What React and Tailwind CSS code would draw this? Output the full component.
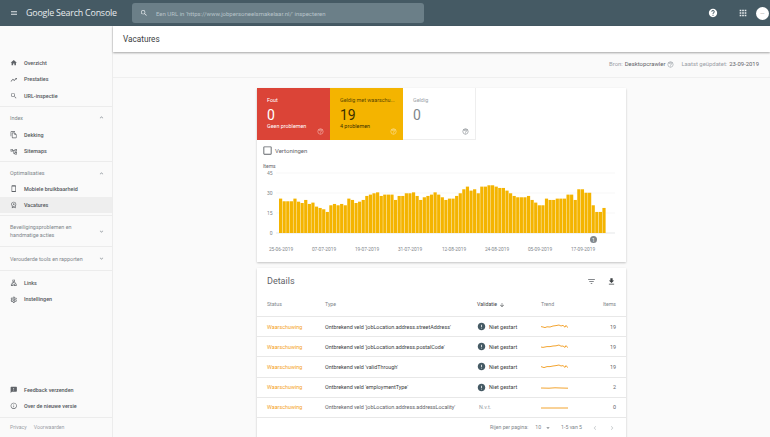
import {
  MdApps,
  MdArrowDownward,
  MdArrowDropDown,
  MdCheckBoxOutlineBlank,
  MdChevronLeft,
  MdChevronRight,
  MdError,
  MdExpandLess,
  MdExpandMore,
  MdFeedback,
  MdFileDownload,
  MdFilterList,
  MdHelp,
  MdHelpOutline,
  MdHome,
  MdInfoOutline,
  MdMenu,
  MdOutlineAccountTree,
  MdOutlineFileCopy,
  MdOutlineSettings,
  MdOutlineSmartphone,
  MdOutlineWorkspacePremium,
  MdOutlineLan,
  MdSearch,
  MdTrendingUp,
} from "react-icons/md";

const bars = [
  25.8, 23.8, 23.8, 23.8, 25.8, 23.5, 22.5, 24.8, 21.8, 22.8, 19.8, 18.8, 17.8, 15.8, 20.8, 21.8,
  20.8, 21.8, 20.8, 25.8, 24.8, 22.5, 23.5, 24.8, 27.8, 28.8, 29.8, 30.5, 27.8, 28.8, 28.8, 28.8,
  24.8, 27.8, 27.8, 29.8, 29.8, 30.5, 27.8, 24.8, 26.8, 27.8, 28.8, 30.5, 28.8, 26.8, 24.8, 25.8,
  25.8, 27.8, 29.8, 32.8, 34.8, 31.8, 32.8, 29.8, 34.8, 34.8, 35.8, 35.8, 34.8, 33.8, 33.8, 31.8,
  29.8, 27.8, 26.8, 26.8, 26.8, 27.8, 24.8, 22.8, 20.8, 20.8, 25.8, 24.8, 24.8, 25.8, 25.8, 25.8,
  28.8, 28.8, 24.8, 32.8, 32.8, 30.2, 30.2, 20.8, 15.8, 15.8, 18.8,
];

const dates = [
  ["25-06-2019", 24],
  ["07-07-2019", 67],
  ["19-07-2019", 110],
  ["31-07-2019", 153],
  ["12-08-2019", 197],
  ["24-08-2019", 240],
  ["05-09-2019", 283],
  ["17-09-2019", 326],
];

const rows = [
  ["Ontbrekend veld 'jobLocation.address.streetAddress'", true, "0,2.6 2,3 4,3.6 6,2.8 9,3 12,2 15,1.6 18,1 20,2 22,1.4 24,3.2 25,1.4 27,3.8", "19"],
  ["Ontbrekend veld 'jobLocation.address.postalCode'", true, "0,3 2,3.4 4,3 6,2.6 9,2.6 12,2 15,1.8 18,1 20,2.2 22,2 24,3.4 25,1.6 27,3.8", "19"],
  ["Ontbrekend veld 'validThrough'", true, "0,2.6 3,3.6 6,2.6 9,2.6 12,2 15,1.6 18,1 20,2 22,1.6 24,3.4 25,1.6 27,3.8", "19"],
  ["Ontbrekend veld 'employmentType'", true, "0,3 8,3.2 14,2.8 20,3 27,3.2", "2"],
  ["Ontbrekend veld 'jobLocation.address.addressLocality'", false, "0,3 27,3", "0"],
];

function NavItem({ icon: Icon, label, active }) {
  return (
    <div className={`flex h-[16.3px] items-center pl-[10px] ${active ? "bg-[#eeeeee]" : ""}`}>
      <Icon className="h-[7.5px] w-[7.5px] text-[#5f6368]" />
      <span className="ml-[6.5px] text-[5.4px] font-medium text-[#53575b]">{label}</span>
    </div>
  );
}

function NavHeading({ children, open }) {
  const Icon = open ? MdExpandLess : MdExpandMore;
  return (
    <div className="flex items-center justify-between pl-[10px] pr-[7px] text-[5.4px] leading-[8px] text-[#80868b]">
      <span>{children}</span>
      <Icon className="h-[7px] w-[7px] shrink-0 text-[#9aa0a6]" />
    </div>
  );
}

function Tile({ label, value, note, className, labelClass, helpClass }) {
  return (
    <div className={`flex w-[73px] flex-col px-[10px] pt-[8px] ${className}`}>
      <div className={`whitespace-nowrap text-[5.4px] leading-[8px] ${labelClass}`}>{label}</div>
      <div className="mt-[2.5px] text-[14px] leading-[16px]">{value}</div>
      <div className="h-[7px] text-[5.4px] leading-[7px]">{note}</div>
      <div className="-mr-[4px] flex justify-end">
        <MdHelpOutline className={`-mt-[2px] h-[7px] w-[7px] ${helpClass}`} />
      </div>
    </div>
  );
}

function Chart() {
  const step = 327 / bars.length;
  return (
    <svg width="369" height="101" className="block" fontFamily="Roboto, sans-serif">
      <text x="6" y="6.5" fontSize="5" fill="#5f6368">Items</text>
      {[["45", 12], ["30", 32], ["15", 52], ["0", 72]].map(([label, y]) => (
        <g key={label}>
          <text x="15.5" y={y + 1.8} fontSize="5" textAnchor="end" fill="#80868b">{label}</text>
          <line x1="19" x2="358" y1={y} y2={y} stroke={label === "0" ? "#d5d7d9" : "#f1f1f1"} strokeWidth="0.6" />
        </g>
      ))}
      {bars.map((value, i) => (
        <rect
          key={i}
          x={22 + i * step}
          y={72 - value * 1.333}
          width={step - 0.4}
          height={value * 1.333}
          fill="#f4b400"
        />
      ))}
      {dates.map(([label, x]) => (
        <text key={label} x={x} y="90" fontSize="4.8" textAnchor="middle" fill="#80868b">{label}</text>
      ))}
      <circle cx="336.5" cy="78.5" r="3.5" fill="#80868b" />
      <text x="336.5" y="80.5" fontSize="5" textAnchor="middle" fill="#fff">1</text>
    </svg>
  );
}

export default function App() {
  return (
    <div className="flex h-[437px] w-[770px] flex-col overflow-hidden bg-[#fafafa] font-['Roboto',sans-serif] text-[#3c4043]">
      <header className="flex h-[26px] shrink-0 items-center bg-[#455a64] text-white">
        <MdMenu className="ml-[10px] h-[8px] w-[8px] text-[#dfe4e6]" />
        <div className="ml-[8px] w-[106px] whitespace-nowrap font-['Open_Sans',sans-serif] text-[8.9px] tracking-[-0.2px] text-[#e8ecee]">
          <span className="font-medium">Google</span> Search Console
        </div>
        <div className="flex h-[20px] w-[292px] items-center rounded-[3px] bg-[#6b7f88]">
          <MdSearch className="ml-[8px] h-[8px] w-[8px] text-[#e8ecee]" />
          <span className="ml-[8px] text-[6px] text-[#b7c3c8]">Een URL in 'https://www.jobpersoneelsmakelaar.nl/' inspecteren</span>
        </div>
        <MdHelp className="ml-auto h-[10px] w-[10px] text-white" />
        <MdApps className="ml-[20px] h-[10px] w-[10px] text-[#e8ecee]" />
        <div className="ml-[8px] mr-[1px] flex h-[13px] w-[13px] items-center justify-center rounded-full bg-white text-[2px] text-[#999]">
          jobs
        </div>
      </header>

      <div className="flex min-h-0 flex-1">
        <aside className="flex w-[113px] shrink-0 flex-col border-r border-[#ececec] bg-[#fafafa]">
          <nav className="pt-[29px]">
            <NavItem icon={MdHome} label="Overzicht" />
            <NavItem icon={MdTrendingUp} label="Prestaties" />
            <NavItem icon={MdSearch} label="URL-inspectie" />
            <div className="mt-[2px] border-b border-[#ececec]" />
            <div className="pt-[7px]">
              <NavHeading open>Index</NavHeading>
            </div>
            <div className="pt-[5px]">
              <NavItem icon={MdOutlineFileCopy} label="Dekking" />
              <NavItem icon={MdOutlineAccountTree} label="Sitemaps" />
            </div>
            <div className="mt-[2px] border-b border-[#ececec]" />
            <div className="pt-[7px]">
              <NavHeading open>Optimalisaties</NavHeading>
            </div>
            <div className="pt-[3px]">
              <NavItem icon={MdOutlineSmartphone} label="Mobiele bruikbaarheid" />
              <NavItem icon={MdOutlineWorkspacePremium} label="Vacatures" active />
            </div>
            <div className="mt-[2px] border-b border-[#ececec]" />
            <div className="py-[7px]">
              <NavHeading>
                Beveiligingsproblemen en
                <br />
                handmatige acties
              </NavHeading>
            </div>
            <div className="border-b border-[#ececec]" />
            <div className="py-[7.5px]">
              <NavHeading>Verouderde tools en rapporten</NavHeading>
            </div>
            <div className="border-b border-[#ececec]" />
            <div className="pt-[4px]">
              <NavItem icon={MdOutlineLan} label="Links" />
              <NavItem icon={MdOutlineSettings} label="Instellingen" />
            </div>
          </nav>
          <div className="mt-auto">
            <NavItem icon={MdFeedback} label="Feedback verzenden" />
            <NavItem icon={MdInfoOutline} label="Over de nieuwe versie" />
            <div className="mt-[3px] flex h-[20px] items-center gap-[7px] border-t border-[#ececec] pl-[10px] text-[5.2px] text-[#9aa0a6]">
              <span>Privacy</span>
              <span>Voorwaarden</span>
            </div>
          </div>
        </aside>

        <main className="min-w-0 flex-1">
          <div className="relative flex h-[26px] items-center bg-white pl-[10px] text-[8.2px] text-[#3c4043] shadow-[0_1px_2px_rgba(0,0,0,0.35)]">
            Vacatures
          </div>
          <div className="flex h-[26px] items-center justify-end border-b border-[#efefef] pr-[11px] text-[5.9px] text-[#9aa0a6]">
            <span>Bron:</span>
            <span className="ml-[2px] text-[#5f6368]">Desktopcrawler</span>
            <MdHelpOutline className="ml-[2px] h-[7px] w-[7px]" />
            <span className="ml-[7px]">Laatst geüpdatet:</span>
            <span className="ml-[2px] text-[#5f6368]">23-09-2019</span>
          </div>

          <div className="ml-[144px] w-[369px] pt-[10px]">
            <section className="bg-white shadow-[0_1px_2px_rgba(0,0,0,0.22)]">
              <div className="flex h-[52px]">
                <Tile label="Fout" value="0" note="Geen problemen" className="bg-[#db4437] text-white" labelClass="text-white" helpClass="text-[#f3b5af]" />
                <Tile label="Geldig met waarschu..." value="19" note="4 problemen" className="bg-[#f4b400] text-[#3c3000]" labelClass="text-[#5a4500]" helpClass="text-[#fbe19a]" />
                <Tile label="Geldig" value="0" note="" className="border-r border-b border-[#eeeeee] bg-white text-[#80868b]" labelClass="text-[#9aa0a6]" helpClass="text-[#80868b]" />
              </div>
              <div className="flex h-[21px] items-center pl-[5px]">
                <MdCheckBoxOutlineBlank className="h-[11px] w-[11px] text-[#5f6368]" />
                <span className="ml-[2px] text-[6px] text-[#5f6368]">Vertoningen</span>
              </div>
              <Chart />
            </section>

            <section className="mt-[6px] bg-white shadow-[0_1px_2px_rgba(0,0,0,0.22)]">
              <div className="flex h-[26px] items-center pl-[10px] pr-[10px] pt-[1px]">
                <span className="text-[9px] text-[#5f6368]">Details</span>
                <MdFilterList className="ml-auto h-[9px] w-[9px] text-[#5f6368]" />
                <MdFileDownload className="ml-[11px] h-[9px] w-[9px] text-[#3c4043]" />
              </div>
              <div className="grid h-[23px] grid-cols-[58px_152px_64px_1fr_auto] items-center border-b border-[#e8e8e8] pl-[10px] pr-[10px] text-[5.2px] text-[#80868b]">
                <span>Status</span>
                <span>Type</span>
                <span className="flex items-center text-[#3c4043]">
                  Validatie
                  <MdArrowDownward className="ml-[2px] h-[6px] w-[6px]" />
                </span>
                <span>Trend</span>
                <span>Items</span>
              </div>
              {rows.map(([type, started, trend, items]) => (
                <div
                  key={type}
                  className="grid h-[20.2px] grid-cols-[58px_152px_64px_1fr_auto] items-center border-b border-[#e8e8e8] pl-[10px] pr-[10px] text-[5.4px]"
                >
                  <span className="text-[#f4a21e]">Waarschuwing</span>
                  <span className={started ? "text-[#3c4043]" : "text-[#5f6368]"}>{type}</span>
                  {started ? (
                    <span className="flex items-center text-[#3c4043]">
                      <MdError className="h-[9px] w-[9px] text-[#455a64]" />
                      <span className="ml-[3px]">Niet gestart</span>
                    </span>
                  ) : (
                    <span className="pl-[2px] text-[#9aa0a6]">N.v.t.</span>
                  )}
                  <svg width="27" height="5" className="block">
                    <polyline points={trend} fill="none" stroke="#f09a1a" strokeWidth="0.9" />
                  </svg>
                  <span className="text-[#5f6368]">{items}</span>
                </div>
              ))}
              <div className="flex h-[20px] items-center justify-end pr-[10px] text-[5.2px] text-[#80868b]">
                <span>Rijen per pagina:</span>
                <span className="ml-[7px]">10</span>
                <MdArrowDropDown className="ml-[3px] h-[8px] w-[8px]" />
                <span className="ml-[9px]">1-5 van 5</span>
                <MdChevronLeft className="ml-[9px] h-[8px] w-[8px] text-[#c4c7ca]" />
                <MdChevronRight className="ml-[9px] h-[8px] w-[8px] text-[#c4c7ca]" />
              </div>
            </section>
          </div>
        </main>
      </div>
    </div>
  );
}
